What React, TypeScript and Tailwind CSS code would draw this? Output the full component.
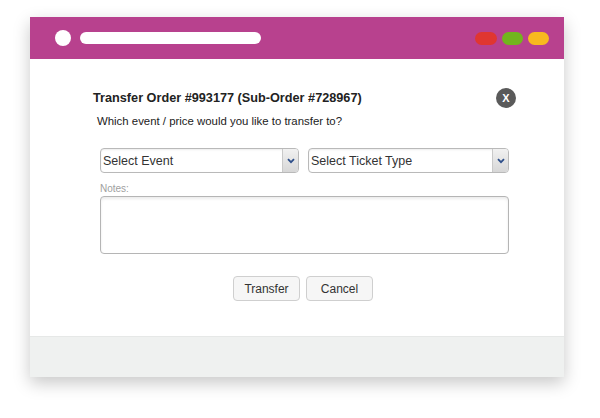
import React from 'react';

const SelectBox: React.FC<{ label: string; width: string }> = ({ label, width }) => (
  <div className={`${width} h-[25px] flex border border-[#b9b9b9] rounded-[4px] bg-white overflow-hidden shadow-[inset_0_1px_2px_rgba(0,0,0,0.08)]`}>
    <div className="flex-1 flex items-center pl-[2px] text-[12.5px] text-[#333] truncate">{label}</div>
    <div className="w-[16px] flex items-center justify-center bg-gradient-to-b from-[#f1f1f1] to-[#d7d7d7] border-l border-[#c9c9c9]">
      <svg width="8" height="6" viewBox="0 0 8 6">
        <path d="M1 1.2 L4 4.2 L7 1.2" fill="none" stroke="#2e4f8a" strokeWidth="1.8" />
      </svg>
    </div>
  </div>
);

const App: React.FC = () => {
  return (
    <div className="w-[600px] h-[418px] bg-white pt-[17px] pl-[30px] font-['Liberation_Sans',Arial,sans-serif]">
      <div className="w-[534px] h-[360px] flex flex-col bg-white shadow-[0_6px_16px_rgba(0,0,0,0.22)]">
        {/* barre de titre */}
        <div className="h-[42px] bg-[#b8418e] flex items-center pl-[25px] pr-[15px]">
          <div className="w-[16px] h-[16px] rounded-full bg-white" />
          <div className="ml-[9px] w-[181px] h-[12px] rounded-full bg-white" />
          <div className="ml-auto flex gap-[5px]">
            <div className="w-[22px] h-[13px] rounded-full bg-[#e03631]" />
            <div className="w-[21px] h-[13px] rounded-full bg-[#72b51d]" />
            <div className="w-[21px] h-[13px] rounded-full bg-[#f8b91e]" />
          </div>
        </div>

        {/* contenu de la modale */}
        <div className="flex-1 pl-[63px] pr-[45px] pt-[29px]">
          <div className="flex items-center justify-between">
            <h2 className="text-[12.7px] font-bold text-[#222] leading-none">Transfer Order #993177 (Sub-Order #728967)</h2>
            <div className="w-[20px] h-[20px] mr-[3px] rounded-full bg-[#5a5a5a] flex items-center justify-center text-white text-[11px] font-bold leading-none">X</div>
          </div>
          <p className="mt-[8px] ml-[4px] text-[11.4px] text-[#222] leading-none">Which event / price would you like to transfer to?</p>

          <div className="mt-[21px] ml-[7px] flex gap-[9px]">
            <SelectBox label="Select Event" width="w-[199px]" />
            <SelectBox label="Select Ticket Type" width="w-[201px]" />
          </div>

          <div className="mt-[11px] ml-[7px] text-[10px] text-[#a0a0a0] leading-none">Notes:</div>
          <div className="mt-[2px] ml-[7px] w-[409px] h-[58px] border border-[#b5b5b5] rounded-[4px] bg-white shadow-[inset_0_2px_3px_rgba(0,0,0,0.08)]" />

          <div className="mt-[22px] ml-[140px] flex gap-[6px]">
            <button className="w-[67px] h-[25px] rounded-[4px] border border-[#cfcfcf] bg-[#f6f6f6] text-[12px] text-[#333]">Transfer</button>
            <button className="w-[67px] h-[25px] rounded-[4px] border border-[#cfcfcf] bg-[#f6f6f6] text-[12px] text-[#333]">Cancel</button>
          </div>
        </div>

        {/* pied */}
        <div className="h-[41px] bg-[#eff1f0] border-t border-[#e6e8e7]" />
      </div>
    </div>
  );
};

export default App;
